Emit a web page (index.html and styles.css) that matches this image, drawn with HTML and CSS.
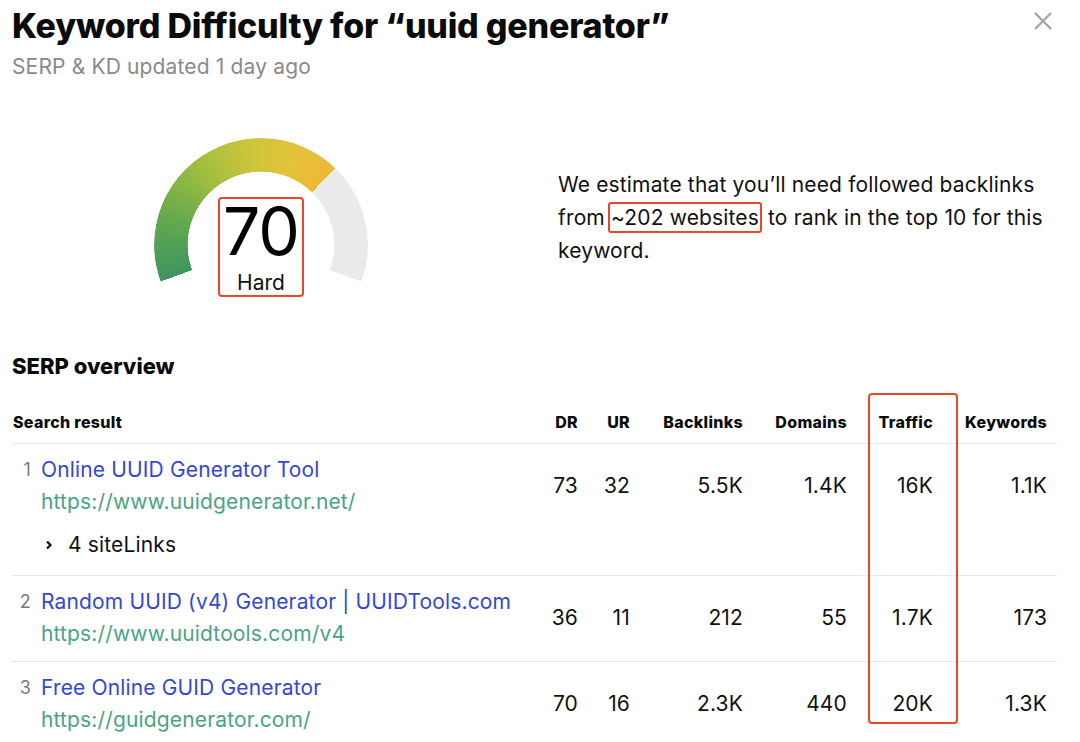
FILE: index.html
```html
<!DOCTYPE html>
<html lang="en">
<head>
<meta charset="utf-8">
<title>Keyword Difficulty</title>
<link rel="stylesheet" href="styles.css">
</head>
<body>
<div class="modal">
  <header class="head">
    <div class="head-text">
      <h1 class="title">Keyword Difficulty for “uuid generator”</h1>
      <p class="sub">SERP &amp; KD updated 1 day ago</p>
    </div>
    <button class="close" aria-label="Close">
      <svg width="20" height="20" viewBox="0 0 20 20"><path d="M2 2 L18 18 M18 2 L2 18" stroke="#a4a4a4" stroke-width="2.3" fill="none"/></svg>
    </button>
  </header>

  <section class="kd">
    <div class="gauge-col">
      <div class="gauge">
        <div class="arc"></div>
        <div class="score">
          <span class="score-num">70</span>
          <span class="score-lbl">Hard</span>
        </div>
      </div>
    </div>
    <p class="estimate">We estimate that you’ll need followed backlinks from <span class="hl">~202 websites</span> to rank in the top 10 for this keyword.</p>
  </section>

  <h2 class="serp-h">SERP overview</h2>

  <div class="table">
    <div class="row thead">
      <div class="c-res">Search result</div>
      <div class="c-n">DR</div>
      <div class="c-n">UR</div>
      <div class="c-n">Backlinks</div>
      <div class="c-n">Domains</div>
      <div class="c-n">Traffic</div>
      <div class="c-n">Keywords</div>
    </div>

    <div class="row trow">
      <div class="c-res">
        <span class="rank">1</span>
        <div class="res-main">
          <a class="res-title">Online UUID Generator Tool</a>
          <span class="res-url">https://www.uuidgenerator.net/</span>
        </div>
      </div>
      <div class="c-n">73</div>
      <div class="c-n">32</div>
      <div class="c-n">5.5K</div>
      <div class="c-n">1.4K</div>
      <div class="c-n">16K</div>
      <div class="c-n">1.1K</div>
      <div class="sitelinks">
        <svg class="chev" width="10" height="12" viewBox="0 0 10 12"><path d="M3 2.5 L6.5 6 L3 9.5" stroke="#111" stroke-width="2.2" fill="none"/></svg>
        <span>4 siteLinks</span>
      </div>
    </div>

    <div class="row trow">
      <div class="c-res">
        <span class="rank">2</span>
        <div class="res-main">
          <a class="res-title">Random UUID (v4) Generator | UUIDTools.com</a>
          <span class="res-url">https://www.uuidtools.com/v4</span>
        </div>
      </div>
      <div class="c-n">36</div>
      <div class="c-n">11</div>
      <div class="c-n">212</div>
      <div class="c-n">55</div>
      <div class="c-n">1.7K</div>
      <div class="c-n">173</div>
    </div>

    <div class="row trow last">
      <div class="c-res">
        <span class="rank">3</span>
        <div class="res-main">
          <a class="res-title">Free Online GUID Generator</a>
          <span class="res-url">https://guidgenerator.com/</span>
        </div>
      </div>
      <div class="c-n">70</div>
      <div class="c-n">16</div>
      <div class="c-n">2.3K</div>
      <div class="c-n">440</div>
      <div class="c-n">20K</div>
      <div class="c-n">1.3K</div>
    </div>

    <div class="traffic-mark"></div>
  </div>
</div>
</body>
</html>
```
FILE: styles.css
```css
* { box-sizing: border-box; }

html, body { margin: 0; background: #fff; }

body {
  font-family: Inter, "Noto Sans", sans-serif;
  color: #111;
  overflow: hidden;
}

.modal {
  padding: 6px 23px 0 12px;
}

.head {
  display: flex;
  justify-content: space-between;
  align-items: flex-start;
}

.title {
  margin: 0;
  font-family: Inter, "Liberation Sans", sans-serif;
  font-weight: 800;
  font-size: 34px;
  line-height: 40px;
  letter-spacing: -0.2px;
  color: #0b0b0b;
}

.sub {
  margin: 7px 0 0;
  font-size: 21px;
  line-height: 28px;
  letter-spacing: 0.15px;
  color: #8a8a8a;
}

.close {
  border: 0;
  background: none;
  padding: 0;
  margin: 5px 4px 0 0;
  width: 20px;
  height: 20px;
  display: block;
}
.close svg { display: block; }

.kd {
  display: flex;
  align-items: flex-start;
  margin-top: 57px;
}

.gauge-col {
  width: 546px;
  flex: none;
  padding-left: 142px;
}

.gauge {
  position: relative;
  width: 214px;
  height: 214px;
}

.arc {
  width: 214px;
  height: 214px;
  border-radius: 50%;
  background: conic-gradient(from 250deg,
    #3d955e 0deg,
    #62a84f 35deg,
    #9dbd3f 70deg,
    #c8c53b 100deg,
    #e3c33a 130deg,
    #efb834 154deg,
    #e9eaec 154deg,
    #e9eaec 220deg,
    transparent 220deg);
  -webkit-mask: radial-gradient(circle, transparent 0 73px, #000 73.6px);
  mask: radial-gradient(circle, transparent 0 73px, #000 73.6px);
}

.score {
  position: absolute;
  left: 64px;
  top: 59px;
  width: 86px;
  height: 100px;
  border: 2px solid #e9472c;
  border-radius: 4px;
  display: flex;
  flex-direction: column;
  align-items: center;
  padding-top: 2px;
  background: #fff;
}

.score-num {
  font-size: 66px;
  line-height: 60px;
  font-weight: 400;
  color: #000;
  letter-spacing: -1px;
}

.score-lbl {
  margin-top: 10px;
  font-size: 21px;
  line-height: 24px;
  color: #111;
}

.estimate {
  margin: 30px 0 0;
  font-size: 21px;
  line-height: 33px;
  letter-spacing: 0.15px;
  color: #111;
}

.hl {
  border: 2px solid #e9472c;
  border-radius: 3px;
  padding: 1px 1px;
  margin-left: -3px;
}

.serp-h {
  margin: 0;
  font-family: Inter, "Liberation Sans", sans-serif;
  font-weight: 800;
  font-size: 22px;
  line-height: 28px;
  color: #0b0b0b;
}

.table {
  position: relative;
  margin-top: 13px;
  padding-top: 19px;
}

.row {
  display: grid;
  grid-template-columns: 514px 52px 52px 113px 104px 86px 114px;
  padding-right: 10px;
  border-bottom: 1px solid #e7e7e7;
}

.thead {
  font-family: Inter, "Liberation Sans", sans-serif;
  font-weight: 800;
  font-size: 16px;
  line-height: 20px;
  letter-spacing: 0.3px;
  padding-bottom: 11px;
  color: #0b0b0b;
}
.thead .c-res { padding-left: 1px; }

.c-n { text-align: right; }

.trow {
  padding-top: 10px;
  padding-bottom: 11px;
  font-size: 21px;
  line-height: 32px;
  letter-spacing: 0.15px;
}
.trow.last { border-bottom: 0; }

.trow .c-n {
  grid-row: 1;
  align-self: center;
  color: #111;
}

.trow .c-res {
  grid-row: 1;
  grid-column: 1;
  display: flex;
  align-items: flex-start;
}

.rank {
  width: 19px;
  flex: none;
  text-align: right;
  margin-right: 10px;
  font-size: 18px;
  color: #7a7a7a;
}

.res-main {
  display: flex;
  flex-direction: column;
}

.res-title { color: #3447d6; text-decoration: none; }
.res-url { color: #4aa483; }

.sitelinks {
  grid-row: 2;
  grid-column: 1;
  display: flex;
  align-items: center;
  margin: 11px 0 3px 32px;
  color: #111;
}
.chev { display: block; margin-right: 14px; }

.traffic-mark {
  position: absolute;
  left: 856px;
  top: 0;
  width: 90px;
  height: 331px;
  border: 2px solid #e9472c;
  border-radius: 4px;
  pointer-events: none;
}
```
